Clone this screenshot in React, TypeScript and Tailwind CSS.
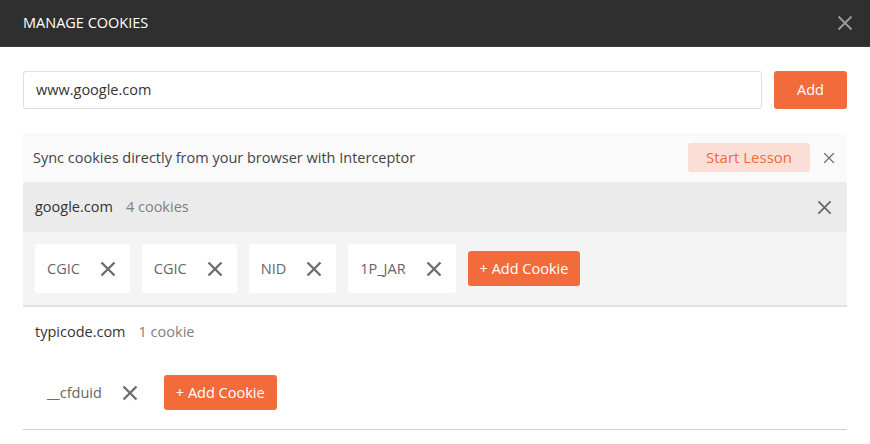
import React from 'react';

const font = { fontFamily: '"Open Sans", "Liberation Sans", sans-serif' };

function XIcon({ size, stroke = 2, className = '' }: { size: number; stroke?: number; className?: string }) {
  return (
    <svg width={size} height={size} viewBox="0 0 16 16" className={className} fill="none">
      <path d="M1.5 1.5L14.5 14.5M14.5 1.5L1.5 14.5" stroke="currentColor" strokeWidth={stroke} strokeLinecap="butt" />
    </svg>
  );
}

function CookieChip({ name, plain }: { name: string; plain?: boolean }) {
  return (
    <div
      className={`flex h-[49px] items-center gap-[20px] rounded-[3px] pl-3 pr-[14px] ${plain ? '' : 'bg-white'}`}
    >
      <span className="text-[14.5px] text-[#666]">{name}</span>
      <XIcon size={16} stroke={2.3} className="text-[#6c6c6c]" />
    </div>
  );
}

function AddCookie() {
  return (
    <button className="h-[35px] rounded-[3px] bg-[#f26b3a] px-3 text-[14.5px] text-white">+ Add Cookie</button>
  );
}

function Domain({
  name,
  count,
  cookies,
  active,
}: {
  name: string;
  count: string;
  cookies: string[];
  active?: boolean;
}) {
  return (
    <div className={active ? 'border-b-2 border-[#e2e2e2] bg-[#f4f4f4]' : 'border-b border-[#cfcfcf] bg-white'}>
      <div
        className={`flex h-[50px] items-center justify-between rounded-t-[3px] pl-3 pr-[15px] ${
          active ? 'bg-[#ebebeb]' : ''
        }`}
      >
        <div className="flex items-center gap-[13px] text-[14.5px]">
          <span className="text-[#333]">{name}</span>
          <span className="text-[#808080]">{count}</span>
        </div>
        {active && <XIcon size={15} stroke={2} className="text-[#6a6a6a]" />}
      </div>
      <div className={`flex items-center gap-3 px-3 ${active ? 'py-3' : 'pb-3 pt-[11px]'}`}>
        {cookies.map((c, i) => (
          <CookieChip key={i} name={c} plain={!active} />
        ))}
        <AddCookie />
      </div>
    </div>
  );
}

export default function App() {
  return (
    <div className="h-[444px] w-[870px] overflow-hidden bg-white" style={font}>
      <div className="flex h-[47px] items-center justify-between border-b border-[#3c3c3c] bg-[#2f2f2f] pl-[23px] pr-[17px]">
        <span className="text-[14.5px] text-white">MANAGE COOKIES</span>
        <XIcon size={16} stroke={2} className="text-[#9a9a9a]" />
      </div>

      <div className="px-[23px] pt-6">
        <div className="flex gap-3">
          <div className="flex h-[38px] flex-1 items-center rounded-[3px] border border-[#dedede] px-3 text-[14.5px] text-[#333]">
            www.google.com
          </div>
          <button className="h-[38px] w-[73px] rounded-[3px] bg-[#f26b3a] text-[14.5px] text-white">Add</button>
        </div>

        <div className="mt-6 flex h-[49px] items-center justify-between bg-[#fafafa] pl-[10px] pr-3">
          <span className="text-[14.5px] text-[#444]">Sync cookies directly from your browser with Interceptor</span>
          <div className="flex items-center gap-[13px]">
            <button className="h-[29px] w-[122px] rounded-[3px] bg-[#fbdfd6] text-[15px] text-[#f26b3a]">
              Start Lesson
            </button>
            <XIcon size={12} stroke={1.8} className="text-[#666]" />
          </div>
        </div>

        <Domain name="google.com" count="4 cookies" cookies={['CGIC', 'CGIC', 'NID', '1P_JAR']} active />
        <Domain name="typicode.com" count="1 cookie" cookies={['__cfduid']} />
      </div>
    </div>
  );
}
